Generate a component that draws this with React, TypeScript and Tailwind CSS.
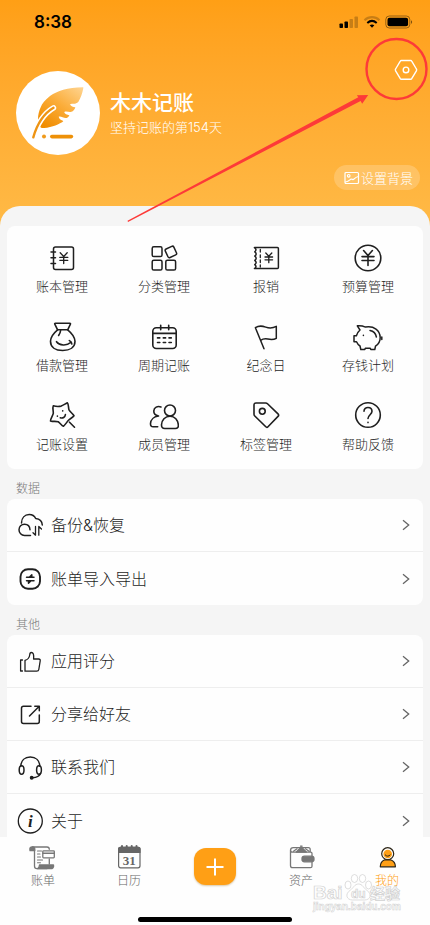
import React from "react";

type IconProps = { children: React.ReactNode; width?: number; className?: string };

function Icon({ children, width = 1.5, className = "text-[#1f1f1f]" }: IconProps) {
  return (
    <svg
      viewBox="0 0 30 30"
      className={"h-[30px] w-[30px] shrink-0 " + className}
      fill="none"
      stroke="currentColor"
      strokeWidth={width}
      strokeLinecap="round"
      strokeLinejoin="round"
      aria-hidden="true"
    >
      {children}
    </svg>
  );
}

const features: { label: string; icon: React.ReactNode }[] = [
  {
    label: "账本管理",
    icon: (
      <Icon>
        <rect x="6.5" y="4" width="20" height="22.5" rx="2" />
        <path d="M4 9h4.5M4 14.8h4.5M4 20.5h4.5" />
        <path d="M13.2 9.8l3.5 3.7 3.5-3.7M16.7 13.5v7M12.8 14.4h8M12.8 17.3h8" strokeWidth="1.3" />
      </Icon>
    ),
  },
  {
    label: "分类管理",
    icon: (
      <Icon>
        <rect x="3.2" y="3.8" width="9.8" height="9.8" rx="1.6" />
        <rect x="3.2" y="17.2" width="9.8" height="9.8" rx="1.6" />
        <rect x="16.8" y="17.2" width="9.8" height="9.8" rx="1.6" />
        <rect x="17.2" y="4.2" width="9.4" height="9.4" rx="1.6" transform="rotate(-25 21.9 8.9)" />
      </Icon>
    ),
  },
  {
    label: "报销",
    icon: (
      <Icon>
        <path d="M3.4 4.6H26.4a1 1 0 0 1 1 1V24.6a1 1 0 0 1-1 1H3.4c1.8-1 2.2-2.4.4-4 1.8-1.4 1.8-2.6 0-4.2 1.8-1.4 1.8-2.8 0-4.3 1.8-1.4 1.8-2.8 0-4.3C5.6 7.4 5.2 5.6 3.4 4.6z" />
        <path d="M9.3 6.5v2.5M9.3 12v2.5M9.3 17v2.5M9.3 22v2" strokeWidth="1.3" />
        <path d="M14.8 10l3 3.2 3-3.2M17.8 13.2v6.5M14 14h7.6M14 16.8h7.6" strokeWidth="1.3" />
      </Icon>
    ),
  },
  {
    label: "预算管理",
    icon: (
      <Icon width={1.6}>
        <circle cx="15" cy="15" r="12.8" />
        <path d="M10.6 7.5L15 12.5l4.4-5M15 12.5v10M9 13.6h12M9 17.5h12" />
      </Icon>
    ),
  },
  {
    label: "借款管理",
    icon: (
      <Icon width={1.6}>
        <path d="M10.6 7.8L7.8 2.2c-.3-.7 0-1 .6-1H22.8c.7 0 .9.5.5 1.1L20.7 7.8z" />
        <path d="M10.6 7.8C6.5 11.2 3.6 15 3.5 19.3c0 6 5 9.2 12.2 9.2S28 25.3 28 19.3C27.9 15 24.8 11.2 20.7 7.8" />
        <path d="M13.6 8.5c-.2 2-1 3.500-2 5M9.500 19.700c2.800 4 10.500 4.400 14.400.6M22.300 18.500l1.900 1.600.6 1.800" />
      </Icon>
    ),
  },
  {
    label: "周期记账",
    icon: (
      <Icon width={1.6}>
        <rect x="3.8" y="5.8" width="23.4" height="20.7" rx="3.5" />
        <path d="M4 11.4h23M11.7 3.2v4.5M19.7 3.2v4.5" />
        <path d="M8.5 15.9h2.3M14.3 15.9h2.3M20 15.9h2.3M8.5 20.5h2.3M14.3 20.5h2.3M20 20.5h2.3" />
      </Icon>
    ),
  },
  {
    label: "纪念日",
    icon: (
      <Icon>
        <path d="M13 26.7L4.400 5.700c3.600-2.400 7-1.800 10.300-.6 3.600 1.300 7 1.200 10.600-.7V16.300c-3.300 1.800-5.700 1.300-8.500.7-2.600-.5-5-.2-7.200 1.300" />
      </Icon>
    ),
  },
  {
    label: "存钱计划",
    icon: (
      <Icon>
        <path d="M7 8L4.300 3.800c3.500-.3 6 .3 8.200 1.300C21 3.600 27 8.500 27.200 15.500c.1 4-1.700 6.600-4.700 8.700l-.7 3.300h-4l-.5-1.300h-5L11.800 27.500h-4l-.8-3.500c-1.700-1.100-2.700-2.500-3.500-4.300H1v-6h2.400C4.200 11.300 5.200 9.500 7 8z" />
        <path d="M17 8.500c3.500.6 5.800 3 6.400 6.500M28.800 15v2.500M10.400 13.300v.3" />
      </Icon>
    ),
  },
  {
    label: "记账设置",
    icon: (
      <Icon width={1.6}>
        <path d="M6.300 4.700c2.700.9 5.200 1 7.900.4 2-.7 3.800-2.200 6.200-3.300 1.200.9.800 4.200 1.600 7.100 1.300 2.200 3.600 3.700 5 5.800-1.300 2-3.700 2.700-5.500 4.600-1.700 1.900-3.200 4.200-5 6-2-.8-3.300-3.300-5.300-4.500-2.400-.8-5.200.1-7.700-.9-.1-2.300 2.200-4.900 2.800-7.600.1-2.600-1-5.200 0-7.600z" />
        <path d="M22.500 21.200l5 5M10.400 15v.2M15.700 9.700v.2M13.300 16.800c2.500.8 4.700-.5 5.100-3.200" />
      </Icon>
    ),
  },
  {
    label: "成员管理",
    icon: (
      <Icon width={1.6}>
        <circle cx="21" cy="9.5" r="5.5" />
        <path d="M21 15.2c-5 0-8.300 4-8.500 8.500-.1 2.600 1 3.800 3.300 3.800H26.300c2.300 0 3.300-1.300 3-3.800-.4-4.600-3.400-8.500-8.300-8.500z" />
        <path d="M12 6C8.500 4.600 5 6.500 4.800 10c-.1 2.300 1.500 4.300 4.700 5-4.500.5-7.700 3.600-8 7.500-.1 2.300.8 3.300 2.700 3.300h4.500" />
      </Icon>
    ),
  },
  {
    label: "标签管理",
    icon: (
      <Icon width={1.6}>
        <path d="M5 2h9.700c.8 0 1.300.2 1.800.7L27 12.900c.8.800.8 1.700 0 2.500L17 25.800c-.7.700-1.500.7-2.200 0L3.800 15c-.5-.5-.8-1-.8-1.800V4c0-1.300.7-2 2-2z" />
        <circle cx="11.3" cy="10.3" r="2.900" />
      </Icon>
    ),
  },
  {
    label: "帮助反馈",
    icon: (
      <Icon width={1.6}>
        <circle cx="15" cy="14" r="12.3" />
        <path d="M11 10.300c0-5.200 8-5 8 0 0 3.200-4 3.700-4 7.200M15 21.300v.3" />
      </Icon>
    ),
  },
];

type Row = { label: string; icon: React.ReactNode };

const dataRows: Row[] = [
  {
    label: "备份&恢复",
    icon: (
      <Icon>
        <path d="M6.500 13C6.600 8 9.600 4.500 14.200 4.500c3 0 5.400 1.600 6.500 4 3.800.4 6.400 3 6.600 6.500" />
        <path d="M15 19.700c-.2-3.400-2.400-5.500-5.500-5.500S4 16.600 4 19.700s2.400 5.700 5.500 5.700H15.500" />
        <path d="M20.500 16.500v8.700l-2.500-2.500M23.800 25.200v-8.700l2.700 2.500" strokeWidth="1.300" />
      </Icon>
    ),
  },
  {
    label: "账单导入导出",
    icon: (
      <Icon width={1.9}>
        <rect x="5.500" y="5.200" width="19.500" height="19.500" rx="7.500" />
        <path d="M11.500 13.300h7.500M16.800 10.800l-2.500 2.500h2.500zM19 16.700h-7.500M13.500 19.200l2.500-2.500h-2.500z" strokeWidth="1.500" />
      </Icon>
    ),
  },
];

const otherRows: Row[] = [
  {
    label: "应用评分",
    icon: (
      <Icon width={1.3}>
        <path d="M7.500 14H5.600V25h1.900M10 14.300c3-.7 4.300-2.300 4.700-5.300.1-1.600.4-2.500 1.600-2.500 2 0 2.700 2 2.300 6.500h5c1.300 0 1.800.7 1.600 1.900L23.800 23.500c-.2 1.200-.8 1.700-2 1.700H10z" />
      </Icon>
    ),
  },
  {
    label: "分享给好友",
    icon: (
      <Icon>
        <path d="M16 7.300H8.500a2 2 0 0 0-2 2V22.500a2 2 0 0 0 2 2H22.300a2 2 0 0 0 2-2V16M14.500 17L24 7.500M19.800 7.300h4.500v4.500" />
      </Icon>
    ),
  },
  {
    label: "联系我们",
    icon: (
      <Icon>
        <path d="M5.800 14.300C6 8.500 9.800 5 15.300 5s9.300 3.500 9.500 9.300M25.500 21.500c-1 2.500-3.500 4-8 4.200" />
        <ellipse cx="6.600" cy="18" rx="2.400" ry="4.200" />
        <ellipse cx="24" cy="18" rx="2.400" ry="4.200" />
        <circle cx="16.700" cy="25.700" r="1.200" fill="currentColor" />
      </Icon>
    ),
  },
  {
    label: "关于",
    icon: (
      <Icon width={1.3}>
        <circle cx="15.300" cy="15" r="12" />
        <text
          x="15.300"
          y="20.500"
          textAnchor="middle"
          fill="currentColor"
          stroke="none"
          className="font-['Liberation_Serif',serif] text-[17px] font-bold italic"
        >
          i
        </text>
      </Icon>
    ),
  },
];

function Section({ title, rows }: { title: string; rows: Row[] }) {
  return (
    <section>
      <h2 className="px-[9px] pt-[11px] pb-px text-[12px] leading-[18px] font-light text-[#777]">{title}</h2>
      <ul className="overflow-hidden rounded-lg bg-[#fefefe]">
        {rows.map((r) => (
          <li key={r.label} className="h-[53px] border-b border-[#eee] last:border-b-0">
            <button type="button" className="flex h-full w-full items-center pr-3 pl-2 text-left">
              {r.icon}
              <span className="ml-1.5 flex-1 text-[16px] leading-6 font-light text-[#1f1f1f]">{r.label}</span>
              <svg viewBox="0 0 10 14" className="h-3.5 w-2.5" fill="none" stroke="#666" strokeWidth="1.3" aria-hidden="true">
                <path d="M2 2.300l5.700 4.700L2 11.700" />
              </svg>
            </button>
          </li>
        ))}
      </ul>
    </section>
  );
}

function StatusBar() {
  return (
    <div className="flex h-11 items-center justify-between pr-[17px] pl-[34px] text-black">
      <span className="font-[Inter,sans-serif] text-[17px] leading-6 font-semibold">8:38</span>
      <svg viewBox="0 0 74 14" className="h-3.5 w-[74px]" aria-hidden="true">
        <rect x="0.500" y="8.500" width="3.500" height="4.500" rx="0.800" />
        <rect x="5.500" y="6.500" width="3.500" height="6.500" rx="0.800" />
        <rect x="10.500" y="4" width="3.500" height="9" rx="0.800" fillOpacity="0.220" />
        <rect x="15.500" y="1.500" width="3.500" height="11.500" rx="0.800" fillOpacity="0.220" />
        <path d="M25.500 5.200c4.400-4 10.600-4 15 0" fill="none" stroke="#000" strokeOpacity="0.220" strokeWidth="2.200" />
        <path d="M28.300 8c2.900-2.600 6.500-2.600 9.400 0" fill="none" stroke="#000" strokeWidth="2" />
        <path d="M30.700 10.300c1.500-1.200 3.100-1.200 4.600 0L33 12.800z" />
        <rect x="46.800" y="1" width="24" height="12" rx="3.500" fill="none" stroke="#000" strokeOpacity="0.400" />
        <rect x="48.500" y="2.700" width="20.600" height="8.600" rx="2" />
        <path d="M72 5.200c1.500.5 1.500 3.100 0 3.600z" fillOpacity="0.500" />
      </svg>
    </div>
  );
}

function Feather() {
  return (
    <svg viewBox="0 0 84 84" className="h-[84px] w-[84px]" aria-hidden="true">
      <defs>
        <linearGradient id="feather" x1="1" y1="0" x2="0.200" y2="1">
          <stop offset="0" stopColor="#ffd592" />
          <stop offset="0.500" stopColor="#fbad3a" />
          <stop offset="1" stopColor="#f08c00" />
        </linearGradient>
      </defs>
      <path
        d="M66.800 16.200C59 16.300 53 17 47.300 18.700 42 20.400 38 22 34 25c-5 4-8 7.500-9.300 11.300C23 40 22 44 22 48.300c0 3.500 1 6.500 3 8.400 3 .5 6 .3 9-.7 4-.9 7-2 10-3.700 1.500-.7 2.800-1.400 3.300-2.300-2-1-4.300-2-4.600-4.300 2.500-1 5.800 2.500 8.600 1 1.200-.7 1.800-1.400 2-2.400-2-.7-4.800-1.300-5-3.300 2.500-1.400 5.500 1 8.400-.7 1.500-1.300 2.400-2.500 2.600-4-2-.3-4.600-.9-5.300-3 2.300-1.200 5.500.5 8.300-2.300 2.500-4.300 4-8.500 5-13.700.2-.8 0-1.100-.5-1.100z"
        fill="url(#feather)"
      />
      <path d="M17.300 66.300C20 57 26 43.500 37.500 36.800" fill="none" stroke="#fff" strokeWidth="5.400" strokeLinecap="round" />
      <path d="M17.300 66.300C20 57 26 43.500 37.500 36.800" fill="none" stroke="#ee9414" strokeWidth="2.400" strokeLinecap="round" />
      <circle cx="28" cy="65.500" r="2" fill="#f09a1c" />
      <rect x="34" y="63.700" width="23.200" height="3.700" rx="1.800" fill="#ee9108" />
    </svg>
  );
}

function Header() {
  return (
    <header>
      <StatusBar />
      <div className="flex items-start pt-[15px] pr-3 pl-4">
        <div className="mt-3 flex flex-1 items-center">
          <div className="h-[84px] w-[84px] overflow-hidden rounded-full bg-white">
            <Feather />
          </div>
          <div className="ml-[10px] text-white">
            <h1 className="text-[21px] leading-7 font-medium">木木记账</h1>
            <p className="text-[13px] leading-5 font-light">坚持记账的第154天</p>
          </div>
        </div>
        <button type="button" aria-label="设置">
          <svg viewBox="0 0 24 22" className="h-[22px] w-6" fill="none" stroke="#fff" strokeWidth="1.400" strokeLinejoin="round" aria-hidden="true">
            <path d="M7.300 1.500h9.400c.5 0 .8.200 1 .6L22.400 10c.4.600.4 1.200 0 1.800L17.700 19.700c-.2.400-.5.600-1 .6H7.300c-.5 0-.8-.2-1-.6L1.600 11.800c-.4-.6-.4-1.200 0-1.800L6.300 2.100c.2-.4.5-.6 1-.6z" />
            <circle cx="12" cy="10.900" r="2.800" />
          </svg>
        </button>
      </div>
      <div className="flex justify-end pt-[10px] pr-[10px] pb-4">
        <button type="button" className="flex h-[25px] items-center gap-px rounded-full bg-white/20 pr-[7px] pl-[10px] text-[13px] leading-[18px] font-light text-white">
          <svg viewBox="0 0 16 14" className="h-3.5 w-4" fill="none" stroke="#fff" strokeWidth="1.200" strokeLinejoin="round" strokeLinecap="round" aria-hidden="true">
            <rect x="1" y="1.500" width="13.500" height="11" rx="1" />
            <circle cx="4.700" cy="4.800" r="1.300" />
            <path d="M1.500 11c3-.3 4-1.800 5.200-2.700 1-.7 1.800.3 2.500.3C10.500 7.500 12 6 14.300 5.500" />
          </svg>
          设置背景
        </button>
      </div>
    </header>
  );
}

function TabBar() {
  const item = "flex flex-1 flex-col items-center text-[12px] leading-[18px] font-light text-[#666]";
  return (
    <nav className="relative flex h-[88px] shrink-0 flex-col justify-between bg-[#fefefe] pt-[5px] pb-[3px]">
      <div className="flex">
        <button type="button" className={item}>
          <Icon width={1.3} className="text-[#777]">
            <path d="M4.500 5h14.500c1.500 0 2.300.8 2.300 2.300M6.500 8.500V24c0 1.800.8 2.600 2.300 2.600H19M21.300 17v5" />
            <path d="M2 8.500c-.6-2.500.4-3.700 2.400-3.700s2.600 1.200 2.400 3.700zM11.500 23h14c.6 2.300-.8 3.700-3 3.700H9.500c1.300-.8 2-2 2-3.700z" fill="currentColor" />
            <path d="M9.500 9h4M9.500 12h2.500M9.500 15h3M9.500 18h5M9.500 20.800h3" strokeWidth="1.100" />
            <rect x="14.800" y="8.800" width="11.500" height="7" rx="0.800" fill="#fff" />
            <path d="M15 11.300h11" strokeWidth="1.500" />
          </Icon>
          账单
        </button>
        <button type="button" className={item}>
          <Icon width={1.2} className="text-[#666]">
            <rect x="4.600" y="5.300" width="21.400" height="20.500" rx="2" />
            <path d="M4.600 10.500V7a1.700 1.700 0 0 1 1.700-1.700h18A1.700 1.700 0 0 1 26 7v3.500z" fill="currentColor" />
            <path d="M8 4v2M12.700 4v2M17.700 4v2M22.500 4v2" strokeWidth="2" />
            <text x="15.300" y="22.500" textAnchor="middle" fill="currentColor" stroke="none" className="font-['Liberation_Serif',serif] text-[13px] font-bold">
              31
            </text>
          </Icon>
          日历
        </button>
        <div className="flex flex-1 items-start justify-center pt-[6px]">
          <button
            type="button"
            aria-label="记一笔"
            className="flex h-[37px] w-[42px] items-center justify-center rounded-xl bg-[#ff9f15] shadow-[0_1px_2px_#d9c8a8]"
          >
            <svg viewBox="0 0 18 18" className="h-[18px] w-[18px]" stroke="#fff" strokeWidth="2" aria-hidden="true">
              <path d="M9 0.500v17M0.500 9h17" />
            </svg>
          </button>
        </div>
        <button type="button" className={item}>
          <Icon width={1.3} className="text-[#777]">
            <path d="M26 14V11.500c0-.8-.4-1.300-1.300-1.300H7C5 10.200 4.500 9 4.500 8V23.500c0 1.500.7 2.200 2.200 2.200H24.500c1 0 1.500-.5 1.500-1.500V20M4.600 8c0-1.500 1.200-2.300 2.700-2.300H22.500c1.200 0 1.700.7 1.700 2v2" />
            <path d="M15.300 5l5 5h-10z" fill="currentColor" />
            <path d="M11 6.800l-3.500 2.500M19.500 6.800l3.500 2.500M14.500 4.200h1.600" />
            <rect x="16" y="14.200" width="12" height="5.600" rx="2.500" fill="currentColor" />
          </Icon>
          资产
        </button>
        <button type="button" aria-current="page" className={item + " text-[#ff9f15]!"}>
          <Icon width={1.2} className="text-[#2b2416]">
            <circle cx="15.700" cy="11.700" r="6" fill="#fefefe" />
            <circle cx="15.700" cy="12" r="4.300" fill="#ff9f15" stroke="none" />
            <path d="M13.300 13c1.400 1.600 3.400 1.600 4.800 0" strokeWidth="1" />
            <path d="M8.300 24.800c0-3.500 2-6 4.500-7h5.800c2.800 1 4.800 3.500 4.800 7z" fill="#ff9f15" />
          </Icon>
          我的
        </button>
      </div>
      <div className="mx-auto h-[5px] w-[154px] rounded-full bg-black" />
    </nav>
  );
}

function Watermark() {
  return (
    <svg
      viewBox="0 0 96 44"
      className="pointer-events-none absolute right-[24px] bottom-[10px] h-11 w-24 font-['Liberation_Sans','Noto_Sans_CJK_SC',sans-serif] font-bold"
      fill="#fff"
      fillOpacity="0.700"
      stroke="#d0d0d0"
      strokeWidth="0.700"
      aria-hidden="true"
    >
      <text x="3" y="28" className="text-[19px]">Bai</text>
      <ellipse cx="38" cy="14" rx="3" ry="4" />
      <ellipse cx="44.500" cy="7.500" rx="3.200" ry="4" />
      <ellipse cx="52.500" cy="7.500" rx="3.200" ry="4" />
      <ellipse cx="58.500" cy="14" rx="3" ry="4" />
      <path d="M48.500 13c-4 0-5 4-8 6-6 4-4 10 2 10h12c6 0 8-6 2-10-3-2-4-6-8-6z" />
      <text x="41" y="27" className="text-[12px]">du</text>
      <text x="60" y="28" className="text-[15px]">经验</text>
      <text x="3" y="39" className="text-[10px]" strokeWidth="0.500">jingyan.baidu.com</text>
    </svg>
  );
}

function Annotation() {
  return (
    <svg viewBox="0 0 310 190" className="pointer-events-none absolute top-9 right-0 h-[190px] w-[310px]" fill="#fd3a38" aria-hidden="true">
      <circle cx="276.500" cy="33" r="30" fill="none" stroke="#fd3a38" strokeWidth="2.400" />
      <path d="M7.500 184.700L238.300 61.200l-1.500-2L248.200 59l-6 8.800-1.600-2.800L8 186z" />
    </svg>
  );
}

export default function App() {
  return (
    <div className="relative flex h-screen flex-col overflow-hidden bg-[#f5f5f5] font-[Inter,'Noto_Sans_CJK_SC',sans-serif]">
      <main className="flex-1 overflow-hidden">
        <div className="bg-linear-to-b from-[#ff9f15] from-0% to-[#ffb945] to-[220px]">
          <Header />
          <div className="rounded-t-[20px] bg-[#f5f5f5] px-[7px] pt-5">
            <div className="grid grid-cols-4 gap-y-[27px] rounded-lg bg-[#fefefe] px-1 pt-[17px] pb-4">
              {features.map((f) => (
                <button key={f.label} type="button" className="flex flex-col items-center gap-1 text-[13px] leading-[18px] font-light text-[#1f1f1f]">
                  {f.icon}
                  {f.label}
                </button>
              ))}
            </div>
            <Section title="数据" rows={dataRows} />
            <Section title="其他" rows={otherRows} />
          </div>
        </div>
      </main>
      <TabBar />
      <Watermark />
      <Annotation />
    </div>
  );
}
